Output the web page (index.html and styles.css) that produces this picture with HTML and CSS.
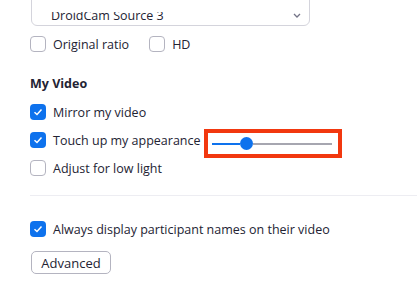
FILE: index.html
```html
<!DOCTYPE html>
<html>
<head>
    <title>Video Settings</title>
    <link rel="stylesheet" href="styles.css">
</head>
<body>
    <div class="settings">
        <div class="select">
            <span class="clip"><span>DroidCam Source 3</span></span>
            <svg class="chevron" width="8" height="5" viewBox="0 0 8 5"><path d="M1 1 L4 4 L7 1" fill="none" stroke="#747487" stroke-width="1.3"/></svg>
        </div>

        <div class="row">
            <label class="check"><span class="box"></span>Original ratio</label>
            <label class="check hd"><span class="box"></span>HD</label>
        </div>

        <h3>My Video</h3>

        <div class="row">
            <label class="check"><span class="box on"></span>Mirror my video</label>
        </div>
        <div class="row">
            <label class="check"><span class="box on"></span>Touch up my appearance</label>
            <div class="highlight">
                <div class="slider">
                    <div class="fill"></div>
                    <div class="thumb"></div>
                    <div class="rest"></div>
                </div>
            </div>
        </div>
        <div class="row">
            <label class="check"><span class="box"></span>Adjust for low light</label>
        </div>

        <hr>

        <div class="row">
            <label class="check"><span class="box on"></span>Always display participant names on their video</label>
        </div>

        <button type="button">Advanced</button>
    </div>
</body>
</html>
```

FILE: styles.css
```css
body {
    margin: 0;
    background-color: #fff;
    font-family: "Open Sans", Arial, sans-serif;
    font-size: 12.5px;
    color: #232333; /* Zoom dark text */
}

.settings {
    padding-left: 30px;
}

.select {
    width: 279px;
    height: 36px;
    margin-top: -10px;
    margin-left: 1px;
    box-sizing: border-box;
    border: 1px solid #d4d4dc;
    border-radius: 6px;
    display: flex;
    align-items: flex-start;
    justify-content: space-between;
    padding: 21px 8px 0 19px;
}

.clip {
    display: block;
    height: 9px;
    overflow: hidden;
}

.clip span {
    display: block;
    line-height: 13px;
    margin-top: -3px;
}

.chevron {
    margin-top: 1px;
}

.row {
    height: 28px;
    display: flex;
    align-items: center;
}

.select + .row {
    margin-top: 4px;
}

.check {
    display: flex;
    align-items: center;
    gap: 7px;
}

.hd {
    margin-left: 20px;
}

.box {
    width: 16px;
    height: 16px;
    box-sizing: border-box;
    border: 1px solid #b4b4c0;
    border-radius: 4px;
}

.box.on {
    border: none;
    background-color: #0e72ed; /* Zoom blue */
    background-image: url("data:image/svg+xml,%3Csvg xmlns='http://www.w3.org/2000/svg' width='16' height='16'%3E%3Cpath d='M4.5 8.2 L7 10.5 L11.5 5.5' fill='none' stroke='white' stroke-width='1.5'/%3E%3C/svg%3E");
}

h3 {
    font-size: 12.5px;
    font-weight: bold;
    margin: 18px 0 6px;
    height: 16px;
    line-height: 16px;
}

.highlight {
    margin-left: 3px;
    margin-top: 7px;
    width: 138px;
    height: 29px;
    box-sizing: border-box;
    border: 4px solid #f2380f; /* red annotation */
    display: flex;
    align-items: center;
    padding: 0 6px 0 4px;
}

.slider {
    flex: 1;
    display: flex;
    align-items: center;
}

.fill {
    width: 28px;
    height: 2px;
    background-color: #0e72ed;
}

.thumb {
    width: 13px;
    height: 13px;
    border-radius: 50%;
    background-color: #0e72ed;
}

.rest {
    flex: 1;
    height: 2px;
    background-color: #a6a6b0;
}

hr {
    border: none;
    border-top: 1px solid #ededf2;
    margin: 13px 0 19px;
}

button {
    margin-top: 8px;
    margin-left: 1px;
    width: 80px;
    height: 23px;
    font-family: inherit;
    font-size: 13px;
    color: #232333;
    background-color: #fff;
    border: 1px solid #b4b4c0;
    border-radius: 5px;
    padding: 0;
}
```
